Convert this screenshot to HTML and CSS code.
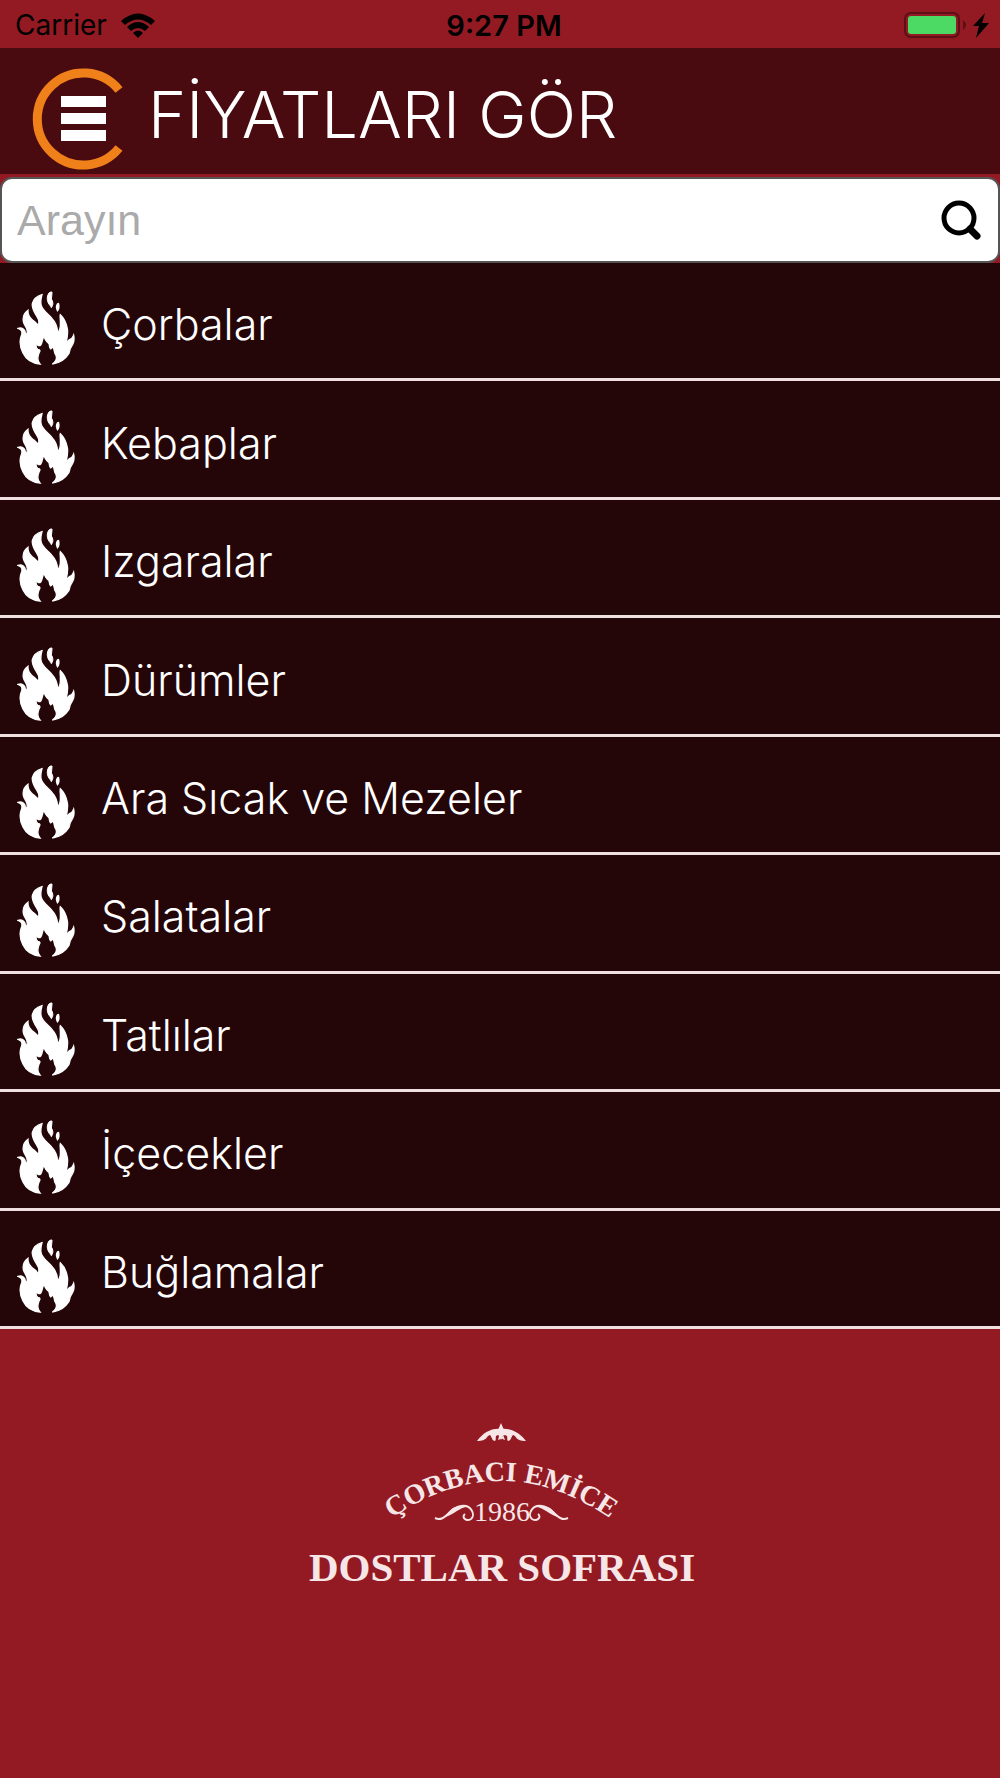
FILE: index.html
```html
<!DOCTYPE html>
<html lang="tr">
<head>
<meta charset="utf-8">
<meta name="viewport" content="width=device-width, initial-scale=1">
<title>Fiyatları Gör</title>
<link rel="stylesheet" href="styles.css">
</head>
<body>
<svg class="defs" aria-hidden="true">
  <symbol id="flame" viewBox="52 65 174 222">
    <path d="M127 76C113 80 101 91 98 103C96 117 104 130 112 142C119 152 119 162 115 172C114 160 104 158 96 150C88 142 84 134 85 123C74 131 69 144 71 156C73 168 83 174 83 187C82 196 78 198 77 190C76 180 67 173 55 177C65 180 69 186 66 196C58 214 62 235 70 251C79 270 96 282 121 284C112 274 113 262 119 249C123 244 119 240 114 240C107 234 109 227 110 222C113 230 119 231 124 226C129 218 127 207 134 200C134 211 141 217 148 223C150 230 149 237 153 239C157 237 158 234 158 231C165 238 163 246 166 253C174 264 169 276 158 284C181 281 198 268 208 252C210 240 214 232 219 225C224 216 224 207 222 198C219 207 213 210 209 211C204 216 201 222 199 223C202 208 206 193 203 178C200 161 194 147 182 136C180 144 183 151 182 160C183 172 181 184 173 192C175 173 167 158 155 145C141 130 126 121 124 105C122 92 125 84 127 76Z" stroke="#fff" stroke-width="4"/>
    <path d="M147 72C141 83 142 92 146 101C149 107 154 111 155 115C162 105 160 97 155 89C156 82 157 75 157 68C152 68 149 69 147 72Z" stroke="#fff" stroke-width="3"/>
    <path d="M172 102C166 111 168 119 173 128C181 120 181 110 178 100Z"/>
  </symbol>
</svg>

<div class="status">
  <div class="status-left">
    <span>Carrier</span>
    <svg class="wifi" viewBox="0 0 34 25" aria-label="Wi-Fi">
      <path d="M0 8Q17-7 34 8L30 12Q17 1 4 12Z"/>
      <path d="M6 14Q17 4 28 14L24 18Q17 12 10 18Z"/>
      <path d="M12 20Q17 15 22 20L17 25Z"/>
    </svg>
  </div>
  <time class="clock">9:27 PM</time>
  <div class="status-right">
    <svg class="battery" viewBox="0 0 86 28" aria-label="Pil dolu">
      <rect x="2" y="2" width="54" height="24" rx="6" fill="none" stroke="#5d0f15" stroke-width="2"/>
      <rect x="5" y="5" width="48" height="18" rx="3" fill="#4cd964"/>
      <path d="M60 9Q66 14 60 19Z" fill="#5d0f15"/>
      <path d="M82 2L70 15H76L73 27L86 12H79Z"/>
    </svg>
  </div>
</div>

<header class="header">
  <button class="menu" type="button" aria-label="Menü">
    <svg viewBox="0 0 90 102">
      <path d="M85 22A46 46 0 1 0 85 80" fill="none" stroke="#f08019" stroke-width="9"/>
      <path d="M27 28h45v11H27zM27 45h45v11H27zM27 62h45v11H27z" fill="#fff"/>
    </svg>
  </button>
  <h1>FİYATLARI GÖR</h1>
</header>

<form class="search" role="search">
  <div class="search-box">
    <input type="text" placeholder="Arayın" aria-label="Arayın">
    <button type="submit" aria-label="Ara">
      <svg viewBox="0 0 40 40"><circle cx="18" cy="18" r="15" fill="none" stroke="#000" stroke-width="5"/><path d="M29 29L36 36" stroke="#000" stroke-width="7" stroke-linecap="round"/></svg>
    </button>
  </div>
</form>

<nav class="list">
  <a href="#corbalar"><svg><use href="#flame"/></svg><span>Çorbalar</span></a>
  <a href="#kebaplar"><svg><use href="#flame"/></svg><span>Kebaplar</span></a>
  <a href="#izgaralar"><svg><use href="#flame"/></svg><span>Izgaralar</span></a>
  <a href="#durumler"><svg><use href="#flame"/></svg><span>Dürümler</span></a>
  <a href="#mezeler"><svg><use href="#flame"/></svg><span>Ara Sıcak ve Mezeler</span></a>
  <a href="#salatalar"><svg><use href="#flame"/></svg><span>Salatalar</span></a>
  <a href="#tatlilar"><svg><use href="#flame"/></svg><span>Tatlılar</span></a>
  <a href="#icecekler"><svg><use href="#flame"/></svg><span>İçecekler</span></a>
  <a href="#buglamalar"><svg><use href="#flame"/></svg><span>Buğlamalar</span></a>
</nav>

<footer class="footer">
  <svg class="logo" viewBox="0 0 420 200" role="img" aria-label="Çorbacı Emice 1986 Dostlar Sofrası">
    <path id="arc" d="M94 114Q211 28 328 114" fill="none"/>
    <path d="M187 31C193 23 201 18 211 19L215 30C211 29 211 26 208 25C204 26 207 29 205 31C202 31 202 27 200 25C196 26 198 31 187 31ZM236 31C230 23 222 18 211 19L208 30C212 29 212 26 215 25C219 26 216 29 218 31C221 31 221 27 223 25C227 26 225 31 236 31Z"/>
    <path d="M211 13L214 20L219 22L214 24L211 30L208 24L203 22L208 20Z"/>
    <text class="logo-arc"><textPath href="#arc" startOffset="50%">ÇORBACI EMİCE</textPath></text>
    <text class="logo-year" x="212" y="111">1986</text>
    <g id="scroll">
      <path d="M145 108C155 113 159 98 171 96C181 94 186 105 181 109C176 112 171 107 175 104" fill="none" stroke="#f7e6e7" stroke-width="2"/>
      <path d="M155 107C162 96 168 94 178 97C169 97 164 105 155 107Z"/>
    </g>
    <use href="#scroll" transform="matrix(-1 0 0 1 423 0)"/>
    <text class="logo-name" x="212" y="171">DOSTLAR SOFRASI</text>
  </svg>
</footer>
</body>
</html>
```
FILE: styles.css
```css
* { box-sizing: border-box; }

body {
  margin: 0;
  min-height: 100vh;
  background: #931a22;
  color: #fff;
  font-family: Inter, "Liberation Sans", sans-serif;
}

button {
  padding: 0;
  border: 0;
  background: none;
  cursor: pointer;
}

svg { display: block; }

.defs { display: none; }

.status {
  display: grid;
  grid-template-columns: 1fr auto 1fr;
  align-items: center;
  height: 48px;
  padding: 2px 11px 0 15px;
  color: #000;
  font-size: 28px;
}

.status-left {
  display: flex;
  align-items: center;
  gap: 14px;
}

.wifi { width: 34px; height: 25px; }

.clock {
  padding-left: 4px;
  font-size: 29px;
  font-weight: 600;
}

.status-right {
  display: flex;
  justify-content: flex-end;
}

.battery { width: 86px; height: 28px; }

.header {
  display: flex;
  align-items: center;
  gap: 24px;
  height: 126px;
  padding: 15px 34px 0;
  background: #4a0b10;
}

.menu svg {
  width: 90px;
  height: 102px;
  overflow: visible;
}

h1 {
  margin: 0;
  padding-bottom: 8px;
  font-size: 65px;
  line-height: 80px;
  font-weight: 300;
}

.search { padding: 3px 0 0; }

.search-box {
  display: flex;
  align-items: center;
  height: 86px;
  padding: 0 17px 0 15px;
  border: 2px solid #555;
  border-radius: 12px;
  background: #fff;
}

.search-box input {
  flex: 1;
  min-width: 0;
  padding: 0;
  border: 0;
  outline: 0;
  background: transparent;
  color: #333;
  font: 43px "Liberation Sans", Arial, sans-serif;
}

.search-box input::placeholder { color: #aaa; }

.search-box svg { width: 40px; height: 40px; }

.list {
  display: grid;
  grid-auto-rows: 1fr;
  min-height: 1066px;
  background: #240609;
}

.list a {
  display: flex;
  align-items: center;
  gap: 26px;
  padding: 7px 17px 0;
  border-bottom: 3px solid #efdfe1;
  color: #fff;
  font-size: 43px;
  line-height: 48px;
  font-weight: 300;
  text-decoration: none;
}

.list svg {
  width: 58px;
  height: 74px;
  margin-top: 8px;
  fill: #fff;
}

.footer {
  display: flex;
  justify-content: center;
  padding: 81px 0 40px;
}

.logo {
  width: 420px;
  height: 200px;
  fill: #f7e6e7;
  font-family: "Liberation Sans Narrow", "Liberation Serif", serif;
  font-weight: 700;
  text-anchor: middle;
}

.logo-arc { font-size: 28px; }
.logo-year { font-size: 28px; font-weight: 400; }
.logo-name { font-size: 41px; }
```
